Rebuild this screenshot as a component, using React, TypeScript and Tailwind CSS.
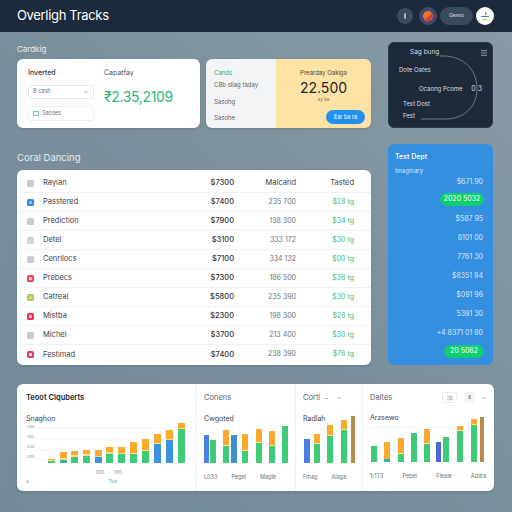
import React from "react";
import { ChevronDown, List, Menu } from "lucide-react";

const rows = [
  { name: "Rayian", icon: "bg-[#c9cccf]", mark: "", price: "$7300", mid: "Malcand", last: "Tasted", head: true },
  { name: "Passtered", icon: "bg-[#2f8be6]", mark: "bg-[#8fc4f5]", price: "$7400", mid: "235 700", last: "$28 tg" },
  { name: "Prediction", icon: "bg-[#c9cccf]", mark: "", price: "$7900", mid: "138 300", last: "$34 tg" },
  { name: "Detel", icon: "bg-[#d2d4d6]", mark: "", price: "$3100", mid: "333 172", last: "$30 tg" },
  { name: "Cenrilocs", icon: "bg-[#c9cccf]", mark: "", price: "$7100", mid: "334 132", last: "$00 tg" },
  { name: "Prebecs", icon: "bg-[#ea4a63]", mark: "bg-[#f7c3cc]", price: "$7300", mid: "186 500", last: "$36 tg" },
  { name: "Catreal", icon: "bg-[#a9cb6a]", mark: "bg-[#e8d75a]", price: "$5800", mid: "235 390", last: "$30 tg" },
  { name: "Mistba", icon: "bg-[#ea3555]", mark: "bg-[#f7c3cc]", price: "$2300", mid: "198 300", last: "$28 tg" },
  { name: "Michel", icon: "bg-[#c9cccf]", mark: "", price: "$3700", mid: "213 400", last: "$30 tg" },
  { name: "Festimad", icon: "bg-[#dc4560]", mark: "bg-[#f7d3d9]", price: "$7400", mid: "238 390", last: "$76 tg" },
];

const blueRows = ["$671.90", "pill:2020 5032", "$587 95", "8101 00", "7761 30", "$8351 94", "$091 96", "5391 30", "+4 8371 01 80", "pill:20 5062"];

const G = "#3ecb78";
const O = "#fba92f";
const B = "#3b93e0";
const Y = "#fbe08a";

// each bar: x, width, then stack of [height, colour] from the baseline up
type Bar = [number, number, [number, string][]];

const chart1: Bar[] = [
  [13, 7, [[2, G], [1, Y], [1, O]]],
  [25, 7, [[3, "#2fb5a8"], [2, Y], [6, O]]],
  [36, 7, [[6, G], [2, Y], [4, O]]],
  [48, 7, [[7, G], [2, Y], [4, O]]],
  [60, 7, [[6, B], [1, Y], [6, O]]],
  [71, 7, [[9, G], [2, Y], [5, O]]],
  [83, 7, [[9, G], [1, Y], [6, O]]],
  [95, 7, [[9, G], [1, Y], [11, O]]],
  [107, 7, [[12, G], [1, Y], [11, O]]],
  [119, 7, [[19, B], [1, Y], [9, O]]],
  [131, 7, [[23, B], [1, Y], [9, O]]],
  [143, 7, [[34, G], [1, Y], [5, O]]],
];
const chart2: Bar[] = [
  [7, 5, [[28, "#4a80e0"]]],
  [13, 6, [[23, G]]],
  [26, 6, [[17, G], [1, Y], [15, O]]],
  [34, 6, [[28, "#3f8fc8"]]],
  [45, 6, [[12, G], [1, Y], [16, O]]],
  [59, 6, [[20, G], [1, Y], [13, O]]],
  [72, 6, [[17, G], [1, Y], [14, O]]],
  [85, 6, [[37, G]]],
];
const chart3: Bar[] = [
  [8, 6, [[24, "#4a80e6"]]],
  [18, 6, [[19, G], [1, Y], [9, O]]],
  [31, 6, [[27, G], [1, Y], [10, O]]],
  [45, 6, [[33, G], [1, Y], [9, O]]],
  [55, 4, [[47, "#b98a4a"]]],
];
const chart4: Bar[] = [
  [8, 6, [[16, G]]],
  [21, 6, [[3, "#2fb5a8"], [17, O]]],
  [35, 6, [[8, G], [1, Y], [15, O]]],
  [48, 6, [[29, G]]],
  [61, 6, [[18, G], [1, Y], [14, O]]],
  [73, 5, [[20, "#4a66e0"]]],
  [80, 6, [[25, G]]],
  [94, 6, [[31, G], [1, Y], [4, O]]],
  [108, 6, [[37, G], [1, Y], [5, O]]],
  [117, 4, [[45, "#b98a4a"]]],
];

function Bars({ bars, width, grid = [], height = 48 }: { bars: Bar[]; width: number; grid?: number[]; height?: number }) {
  return (
    <svg width={width} height={height} className="block">
      {grid.map((y) => (
        <line key={y} x1={0} x2={width} y1={y} y2={y} stroke="#eff1f3" strokeWidth="0.7" />
      ))}
      {bars.map(([x, w, stack], i) => {
        let y = height;
        return (
          <g key={i}>
            {stack.map(([h, c], j) => {
              y -= h;
              return <rect key={j} x={x} y={y} width={w} height={h} fill={c} />;
            })}
          </g>
        );
      })}
    </svg>
  );
}

export default function App() {
  return (
    <div className="w-[512px] h-[512px] overflow-hidden bg-gradient-to-bl from-[#8a9ca6] via-[#7a8f9c] to-[#738a99] font-['Inter','Liberation_Sans',sans-serif]">
      <header className="h-[32px] bg-[#1d2a3b] flex items-center pl-[17px] pr-[18px] text-white">
        <h1 className="text-[13px] tracking-tight flex-1">Overligh Tracks</h1>
        <div className="flex items-center">
          <div className="w-[16px] h-[16px] rounded-full bg-[#3b4a5c] flex items-center justify-center">
            <span className="w-[2px] h-[6px] rounded-[1px] bg-[#aab5c0]" />
          </div>
          <div className="ml-[6px] w-[18px] h-[18px] rounded-full bg-[#3f4a6a] flex items-center justify-center">
            <svg width="14" height="14" viewBox="0 0 14 14">
              <circle cx="7" cy="7" r="5" fill="#f0702c" />
              <path d="M3 12 L11 4 L12 8 L7 13 Z" fill="#c8433c" />
            </svg>
          </div>
          <div className="ml-[3px] w-[33px] h-[18px] rounded-full bg-[#3b4a5c] flex items-center justify-center text-[5px] text-[#d5dbe1]">Gesso</div>
          <div className="ml-[3px] w-[18px] h-[18px] rounded-full bg-white flex items-center justify-center">
            <svg width="12" height="12" viewBox="0 0 12 12">
              <path d="M6 1 L8 4 L6 5.5 Z" fill="#3cb878" />
              <path d="M2 6 H10 V7 H2 Z" fill="#2f8be6" />
              <path d="M3.5 9 H8.5 V10 H3.5 Z" fill="#f0b429" />
            </svg>
          </div>
        </div>
      </header>

      <main className="pl-[17px] pr-[19px] pt-[10px]">
        <section className="flex gap-[17px] h-[86px]">
          <div className="w-[354px]">
            <div className="h-[17px] pt-[1px] text-[8px] text-[#e8eef2]">Cardkig</div>
            <div className="flex gap-[6px] h-[69px]">
              <div className="w-[183px] bg-white rounded-[6px] flex pl-[11px] pt-[9px] shadow-sm">
                <div className="w-[76px]">
                  <div className="text-[7px] text-[#2a333c] font-medium">Inverted</div>
                  <div className="mt-[6px] w-[66px] h-[14px] rounded-[3px] border border-[#e5e7ea] flex items-center justify-between px-[4px] text-[5.5px] text-[#68727c]">
                    <span>B cash</span>
                    <ChevronDown className="w-[6px] h-[6px]" />
                  </div>
                  <div className="mt-[7px] w-[66px] h-[15px] rounded-[3px] border border-[#eceef0] flex items-center gap-[3px] px-[4px] text-[5.5px] text-[#68727c]">
                    <span className="w-[6px] h-[5px] border border-[#7cc4c8]" />
                    <span>Saoses</span>
                  </div>
                </div>
                <div>
                  <div className="text-[7px] text-[#4a5560]">Capatfay</div>
                  <div className="mt-[7px] text-[14px] tracking-tight text-[#2fb67c]">₹2.35,2109</div>
                </div>
              </div>
              <div className="w-[165px] rounded-[6px] overflow-hidden flex shadow-sm">
                <div className="w-[70px] bg-[#f3f4f6] pl-[8px] pt-[9px] text-[6px] text-[#59636d]">
                  <div className="text-[#35b06f]">Cands</div>
                  <div className="mt-[3px] whitespace-nowrap">CBb sliag taday</div>
                  <div className="mt-[8px]">Sasohg</div>
                  <div className="mt-[7px]">Sasohe</div>
                </div>
                <div className="flex-1 bg-[#fde3a6] flex flex-col items-center pt-[9px] relative">
                  <div className="text-[6px] text-[#4d4a3c]">Prearday Oakiga</div>
                  <div className="mt-[2px] text-[14px] leading-[18px] text-[#1e2328]">22.500</div>
                  <div className="text-[4.5px] text-[#6d6854]">sy ba</div>
                  <button className="absolute right-[6px] bottom-[4px] w-[39px] h-[14px] rounded-full bg-[#2390ee] text-[5.5px] text-white">Ear ba ra</button>
                </div>
              </div>
            </div>
          </div>
          <aside className="w-[105px] bg-[#1e2a3a] rounded-[6px] relative text-[6.5px] text-[#d7dde3] border border-[#2c3949]">
            <svg width="105" height="86" className="absolute inset-0">
              <path d="M51 13 C72 12 88 24 88 46 C88 64 75 76 56 76 H32" fill="none" stroke="#8d99a6" strokeWidth="0.7" />
            </svg>
            <div className="relative pl-[21px] flex items-center h-[20px]">Sag bung</div>
            <Menu className="absolute right-[4px] top-[6px] w-[8px] h-[8px] text-[#c0c8d0]" />
            <div className="relative mt-[2px] pl-[10px] text-[6px]">Dote Oates</div>
            <div className="relative mt-[10px] pl-[30px] pr-[10px] text-[6px] flex justify-between whitespace-nowrap"><span>Ocaong Pcome</span><span className="text-[7px] leading-[9px]">0 3</span></div>
            <div className="relative mt-[6px] pl-[14px] text-[6px]">Text Dost</div>
            <div className="relative mt-[3px] pl-[14px] text-[6px]">Fest</div>
          </aside>
        </section>

        <section className="flex gap-[17px] h-[221px] mt-[16px]">
          <div className="w-[354px] pt-[7px]">
            <div className="h-[19px] text-[9.5px] text-[#e6ecf0]">Coral Dancing</div>
            <div className="h-[195px] bg-white rounded-[6px] pt-[4px] shadow-sm">
              {rows.map((r, i) => (
                <div key={r.name} className={`h-[19px] flex items-center pl-[10px] text-[7.5px] text-[#3a424a] ${i < rows.length - 1 ? "border-b border-[#f0f1f3]" : ""}`}>
                  <span className={`w-[7px] h-[7px] rounded-[1.5px] flex items-center justify-center ${r.icon}`}>
                    {r.mark && <span className={`w-[3px] h-[3px] rounded-[0.5px] ${r.mark}`} />}
                  </span>
                  <span className="ml-[9px] w-[100px]">{r.name}</span>
                  <span className="w-[91px] text-right font-medium text-[#2f363d]">{r.price}</span>
                  <span className={`w-[62px] text-right ${r.head ? "" : "text-[#6b747c] text-[7px]"}`}>{r.mid}</span>
                  <span className={`w-[58px] text-right ${r.head ? "" : "text-[#3fbc7d] text-[7px]"}`}>{r.last}</span>
                </div>
              ))}
            </div>
          </div>
          <aside className="w-[105px] bg-[#348fe0] rounded-[6px] pt-[8px] px-[7px] text-white">
            <div className="text-[7px] font-medium">Test Dept</div>
            <div className="mt-[3px] text-[6px] text-[#cfe5fa]">Imaginary</div>
            <div className="text-[7px] text-right text-[#d6e9fb] pr-[3px]">
              {blueRows.map((v, i) =>
                v.startsWith("pill:") ? (
                  <div key={i} className="h-[19px] flex items-center justify-end -mr-[1px]">
                    <span className={`h-[13px] rounded-full bg-[#0fcf70] text-white flex items-center justify-center ${i === 1 ? "w-[44px]" : "w-[40px]"}`}>
                      {v.slice(5)}
                    </span>
                  </div>
                ) : (
                  <div key={i} className="h-[19px] leading-[19px] first:h-[15px] first:leading-[14px]">{v}</div>
                )
              )}
            </div>
          </aside>
        </section>

        <section className="mt-[19px] w-[477px] h-[107px] bg-white rounded-[6px] flex shadow-sm text-[#3d454d]">
          <div className="w-[180px] pl-[9px] pt-[8px] border-r border-[#f1f2f4]">
            <div className="text-[7.5px] font-semibold text-[#20262c]">Teoot Clquberts</div>
            <div className="mt-[11px] text-[7px]">Snaghon</div>
            <div className="relative -ml-[9px] -mt-[10px]">
              <div className="absolute left-[10px] top-[7px] flex flex-col text-[4px] leading-[10px] text-[#8a929a]">
                <span>200</span><span>100</span><span>050</span><span>000</span>
              </div>
              <div className="pl-[18px]"><Bars bars={chart1} width={161} grid={[13, 24, 35, 44]} /></div>
            </div>
            <div className="mt-[7px] pl-[70px] flex gap-[10px] text-[4.5px] text-[#7c858d]"><span>200</span><span>100</span></div>
            <div className="mt-[2px] flex text-[4.5px]"><span className="text-[#7c858d]">a</span><span className="ml-[80px] text-[#3fbc7d]">Test</span></div>
          </div>
          <div className="w-[99px] pl-[7px] pt-[8px] border-r border-[#f1f2f4]">
            <div className="text-[7.5px] text-[#59636d]">Conens</div>
            <div className="mt-[11px] text-[7px]">Cwgoted</div>
            <div className="-ml-[7px] -mt-[10px]"><Bars bars={chart2} width={98} /></div>
            <div className="mt-[10px] flex gap-[14px] text-[5.5px] text-[#6b747c]"><span>L033</span><span>Pegel</span><span>Magle</span></div>
          </div>
          <div className="w-[67px] pl-[7px] pt-[8px] border-r border-[#f1f2f4]">
            <div className="flex items-center text-[7.5px] text-[#59636d]">
              <span>Cortl</span>
              <span className="ml-[5px] text-[6px]">–</span>
              <ChevronDown className="ml-[8px] w-[6px] h-[6px]" />
            </div>
            <div className="mt-[11px] text-[7px]">Radlah</div>
            <div className="-ml-[7px] -mt-[10px]"><Bars bars={chart3} width={66} /></div>
            <div className="mt-[10px] flex gap-[14px] text-[5.5px] text-[#6b747c]"><span>Fmag</span><span>Alaga</span></div>
          </div>
          <div className="flex-1 pl-[7px] pt-[8px]">
            <div className="flex items-center text-[7.5px] text-[#59636d]">
              <span className="flex-1">Daltes</span>
              <span className="w-[15px] h-[11px] rounded-[3px] border border-[#e8eaed] flex items-center justify-center"><List className="w-[6px] h-[6px]" /></span>
              <span className="ml-[7px] w-[11px] h-[11px] rounded-[3px] bg-[#f4f5f6] text-[5px] flex items-center justify-center">8</span>
              <ChevronDown className="ml-[6px] mr-[7px] w-[6px] h-[6px]" />
            </div>
            <div className="mt-[10px] text-[7px]">Arzsewo</div>
            <div className="-ml-[7px] -mt-[10px]"><Bars bars={chart4} width={130} grid={[13]} /></div>
            <div className="mt-[10px] flex justify-between pr-[8px] text-[5.5px] text-[#6b747c]"><span>1/1T3</span><span>Pepel</span><span>Fleale</span><span>Adata</span></div>
          </div>
        </section>
      </main>
    </div>
  );
}
